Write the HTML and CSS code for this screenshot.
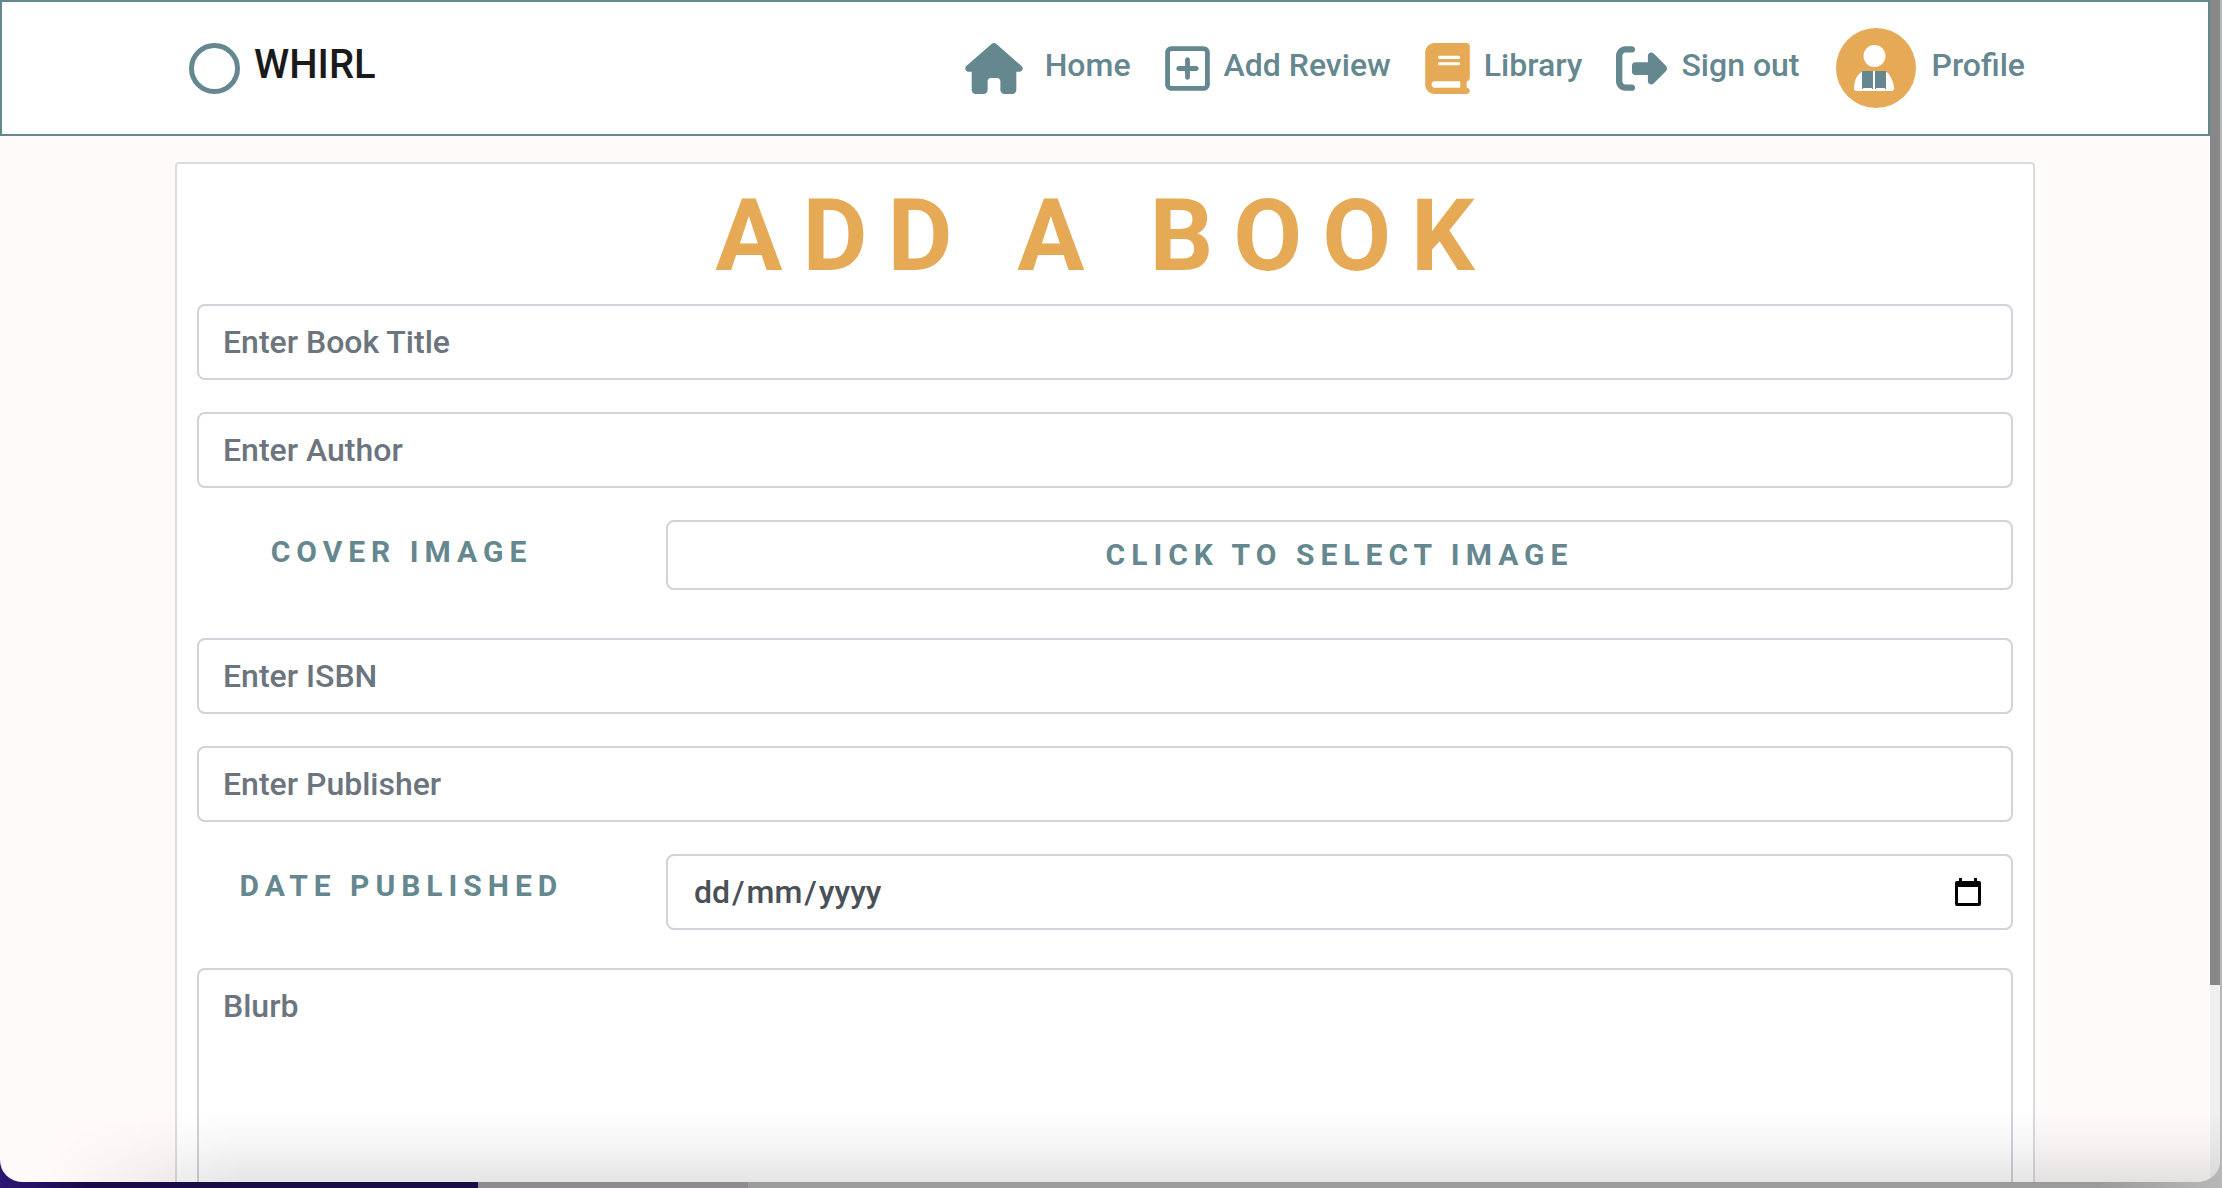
FILE: index.html
```html
<!DOCTYPE html>
<html lang="en">
<head>
<meta charset="utf-8">
<title>Whirl - Add a book</title>
<link rel="stylesheet" href="styles.css">
</head>
<body>
<div class="window">
  <div class="page">
    <header class="navbar">
      <div class="container nav-inner">
        <a class="brand" href="#"><span class="brand-ring"></span><span class="brand-name">WHIRL</span></a>
        <nav class="nav-links">
          <a class="nav-link home" href="#"><svg class="icon" viewBox="0 0 576 512" width="58" height="51"><path d="M575.8 255.5c0 18-15 32.1-32 32.1h-32l.7 160.2c0 2.7-.2 5.4-.5 8.1V472c0 22.1-17.9 40-40 40H456c-1.1 0-2.2 0-3.3-.1c-1.4 .1-2.8 .1-4.2 .1H416 392c-22.1 0-40-17.9-40-40V448 384c0-17.7-14.3-32-32-32H256c-17.7 0-32 14.3-32 32v64 24c0 22.1-17.9 40-40 40H160 128.1c-1.5 0-3-.1-4.5-.2c-1.2 .1-2.4 .2-3.6 .2H104c-22.1 0-40-17.9-40-40V360c0-.9 0-1.9 .1-2.8V287.6H32c-18 0-32-14-32-32.1c0-9 3-17 10-24L266.4 8c7-7 15-8 22-8s15 2 21 7L564.8 231.5c8 7 12 15 11 24z"/></svg><span>Home</span></a>
          <a class="nav-link" href="#"><svg class="icon" viewBox="0 0 448 512" width="45" height="51"><path d="M64 80c-8.800 0-16 7.200-16 16V416c0 8.800 7.200 16 16 16H384c8.800 0 16-7.200 16-16V96c0-8.800-7.200-16-16-16H64zM0 96C0 60.700 28.700 32 64 32H384c35.300 0 64 28.700 64 64V416c0 35.300-28.700 64-64 64H64c-35.300 0-64-28.700-64-64V96zM200 344V280H136c-13.300 0-24-10.700-24-24s10.700-24 24-24h64V168c0-13.300 10.700-24 24-24s24 10.700 24 24v64h64c13.300 0 24 10.700 24 24s-10.700 24-24 24H248v64c0 13.300-10.700 24-24 24s-24-10.700-24-24z"/></svg><span>Add Review</span></a>
          <a class="nav-link" href="#"><svg class="icon accent" viewBox="0 0 448 512" width="45" height="51"><path d="M96 0C43 0 0 43 0 96V416c0 53 43 96 96 96H384h32c17.700 0 32-14.300 32-32s-14.300-32-32-32V384c17.700 0 32-14.300 32-32V32c0-17.700-14.300-32-32-32H384 96zm0 384H352v64H96c-17.700 0-32-14.300-32-32s14.300-32 32-32zm32-240c0-8.800 7.200-16 16-16H336c8.800 0 16 7.200 16 16s-7.200 16-16 16H144c-8.800 0-16-7.200-16-16zm16 48H336c8.800 0 16 7.200 16 16s-7.200 16-16 16H144c-8.800 0-16-7.200-16-16s7.200-16 16-16z"/></svg><span>Library</span></a>
          <a class="nav-link" href="#"><svg class="icon" viewBox="0 0 512 512" width="51" height="51"><path d="M377.900 105.900L500.700 228.700c7.200 7.200 11.300 17.100 11.300 27.300s-4.100 20.100-11.300 27.300L377.900 406.100c-6.400 6.400-15 9.900-24 9.900c-18.700 0-33.900-15.200-33.900-33.900l0-62.100-128 0c-17.700 0-32-14.300-32-32l0-64c0-17.700 14.300-32 32-32l128 0 0-62.100c0-18.700 15.200-33.900 33.900-33.900c9 0 17.600 3.600 24 9.900zM160 96L96 96c-17.700 0-32 14.300-32 32l0 256c0 17.700 14.300 32 32 32l64 0c17.700 0 32 14.300 32 32s-14.300 32-32 32l-64 0c-53 0-96-43-96-96L0 128C0 75 43 32 96 32l64 0c17.700 0 32 14.300 32 32s-14.300 32-32 32z"/></svg><span>Sign out</span></a>
          <a class="nav-link profile" href="#"><svg class="avatar" viewBox="0 0 80 80" width="80" height="80"><circle class="avatar-bg" cx="40" cy="40" r="40"/><circle cx="38.500" cy="28" r="11" fill="#fff"/><path d="M27 43Q18 48 18 60Q18 63 21 63H55Q59 63 58 59Q56 47 49 43Z" fill="#fff"/><path class="avatar-book" d="M26 43H37V61H36V60H27V61H26ZM39 43H50V61H49V60H40V61H39Z"/></svg><span>Profile</span></a>
        </nav>
      </div>
    </header>
    <main class="container">
      <form class="card">
        <h1 class="title">ADD A BOOK</h1>
        <input class="field" type="text" placeholder="Enter Book Title" aria-label="Book title">
        <input class="field" type="text" placeholder="Enter Author" aria-label="Author">
        <div class="row image-row">
          <label class="caption" for="cover">COVER IMAGE</label>
          <button class="field pick" id="cover" type="button">CLICK TO SELECT IMAGE</button>
        </div>
        <input class="field" type="text" placeholder="Enter ISBN" aria-label="ISBN">
        <input class="field" type="text" placeholder="Enter Publisher" aria-label="Publisher">
        <div class="row date-row">
          <label class="caption" for="day">DATE PUBLISHED</label>
          <div class="field date">
            <input class="date-part" id="day" type="text" placeholder="dd" maxlength="2"><span>/</span><input class="date-part" type="text" placeholder="mm" maxlength="2" aria-label="Month"><span>/</span><input class="date-part" type="text" placeholder="yyyy" maxlength="4" aria-label="Year">
            <button class="date-button" type="button" aria-label="Open calendar"><svg viewBox="0 0 26 28" width="26" height="28"><path fill-rule="evenodd" d="M4 0h3v3h12V0h3v3h2q2 0 2 2v21q0 2-2 2H2q-2 0-2-2V5q0-2 2-2h2zM3 9v16h20V9z"/></svg></button>
          </div>
        </div>
        <textarea class="field blurb" placeholder="Blurb" aria-label="Blurb"></textarea>
      </form>
    </main>
  </div>
  <div class="scrollbar"><div class="thumb"></div></div>
</div>
</body>
</html>
```
FILE: styles.css
```css
:root {
  --teal: #65878f;
  --amber: #e6aa57;
  --line: #ced4da;
}

* {
  box-sizing: border-box;
}

body {
  margin: 0;
  height: 100vh;
  overflow: hidden;
  font-family: Roboto, "Noto Sans", sans-serif;
  font-size: 32px;
  font-weight: 500;
  line-height: 48px;
  /* desktop showing behind the rounded window */
  background: linear-gradient(90deg, #2d1674 0, #190b48 90px, #190b48 478px, #8f8c90 478px, #8f8c90 748px, #9b9b9b 748px, #9b9b9b 2100px, #b8b8b8 100%);
}

.window {
  position: relative;
  display: flex;
  height: calc(100vh - 6px);
  margin-right: 2px;
  overflow: hidden;
  border-radius: 0 0 22px 22px;
  background: #fffbfa;
}

/* shade along the lower edge of the window */
.window::after {
  content: "";
  position: absolute;
  inset: auto 0 0 0;
  height: 72px;
  background: linear-gradient(rgba(0, 0, 0, 0), rgba(0, 0, 0, 0.04) 50%, rgba(0, 0, 0, 0.1));
  mask-image: linear-gradient(90deg, transparent 40px, #000 240px);
  pointer-events: none;
}

.page {
  flex: 1;
  min-width: 0;
}

.scrollbar {
  width: 10px;
  background: #f0f0f0;
}

.thumb {
  height: 83.3%;
  background: #878787;
}

.container {
  max-width: 1860px;
  margin: 0 auto;
}

.navbar {
  height: 136px;
  border: 2px solid var(--teal);
  background: #fff;
}

.nav-inner {
  display: flex;
  align-items: center;
  justify-content: space-between;
  height: 100%;
  padding: 0 10px 0 14px;
}

.brand {
  display: flex;
  align-items: center;
  gap: 14px;
  color: #1a1a1a;
  font-size: 40px;
  line-height: 56px;
  text-decoration: none;
}

.brand-name {
  padding-bottom: 6px;
}

.brand-ring {
  width: 51px;
  height: 51px;
  border: 5px solid var(--teal);
  border-radius: 50%;
}

.nav-links {
  display: flex;
  align-items: center;
  gap: 34px;
}

.nav-link {
  display: flex;
  align-items: center;
  gap: 14px;
  color: var(--teal);
  text-decoration: none;
}

.nav-link span {
  padding-bottom: 6px;
}

.home {
  gap: 22px;
}

.profile {
  gap: 16px;
  margin-left: 2px;
}

.icon {
  fill: currentColor;
}

.accent {
  color: var(--amber);
}

.avatar-bg {
  fill: var(--amber);
}

.avatar-book {
  fill: var(--teal);
}

.card {
  display: flex;
  flex-direction: column;
  gap: 32px;
  margin-top: 26px;
  padding: 20px;
  border: 2px solid #dcdbe0;
  border-radius: 4px;
  background: #fff;
}

.title {
  margin: 0 0 -16px;
  color: var(--amber);
  font-size: 100px;
  font-weight: 700;
  line-height: 104px;
  letter-spacing: 20px;
  text-align: center;
}

.field {
  width: 100%;
  height: 76px;
  padding: 12px 24px;
  border: 2px solid var(--line);
  border-radius: 8px;
  background: #fff;
  color: #495057;
  font: inherit;
}

.field::placeholder {
  color: #6c757d;
  opacity: 1;
}

.row {
  display: grid;
  grid-template-columns: 409fr 1347fr;
  column-gap: 60px;
}

.caption {
  color: var(--teal);
  font-size: 30px;
  font-weight: 700;
  letter-spacing: 6px;
  line-height: 48px;
  padding-top: 8px;
  text-align: center;
}

.pick {
  height: 70px;
  padding: 0;
  color: var(--teal);
  font-size: 30px;
  font-weight: 700;
  letter-spacing: 6px;
}

.image-row {
  margin-bottom: 16px;
}

.date-row {
  margin-bottom: 6px;
}

.date {
  display: flex;
  align-items: center;
}

.date-part {
  field-sizing: content;
  padding: 0 2px;
  border: 0;
  background: none;
  color: inherit;
  font: inherit;
}

.date-part::placeholder {
  color: inherit;
  opacity: 1;
}

.date-button {
  display: flex;
  margin-left: auto;
  margin-right: 6px;
  padding: 0;
  border: 0;
  background: none;
}

.blurb {
  display: block;
  height: 320px;
  resize: none;
}
```
